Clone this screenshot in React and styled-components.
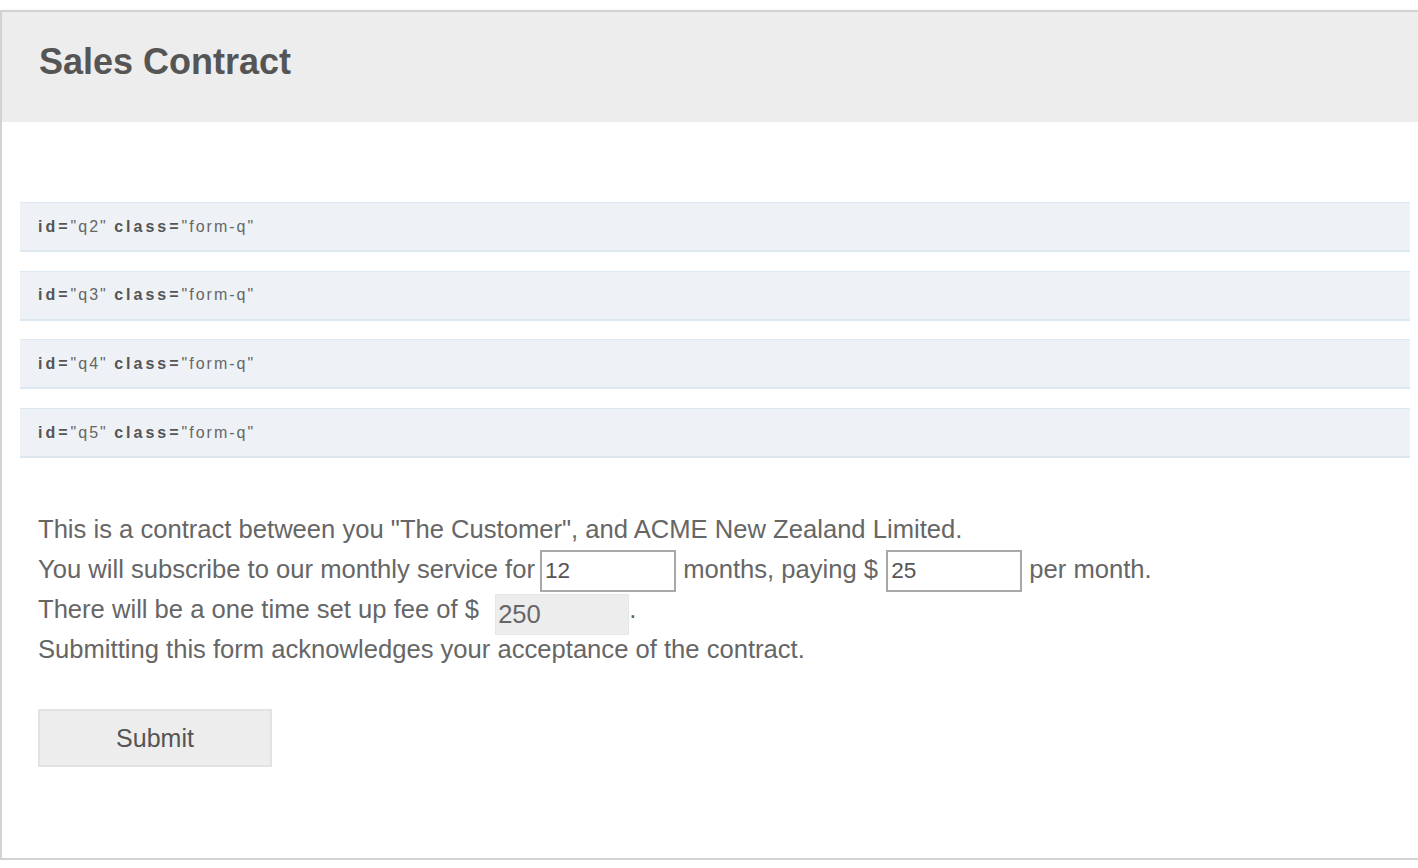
import React from "react";
import styled, { createGlobalStyle } from "styled-components";

const Global = createGlobalStyle`
  html, body {
    margin: 0;
    padding: 0;
    background: #ffffff;
    overflow: hidden;
  }
  body {
    font-family: "Liberation Sans", Arial, sans-serif;
  }
`;

const Frame = styled.div`
  margin-top: 10px;
  width: 1430px;
  box-sizing: border-box;
  border: 2px solid #d2d2d2;
  box-shadow: 0 0 4px rgba(0, 0, 0, 0.04);
  background: #ffffff;
`;

const Header = styled.header`
  height: 110px;
  box-sizing: border-box;
  background: #ededed;
  padding: 29.5px 37px 0;
`;

const Title = styled.h2`
  margin: 0;
  font-family: "Liberation Sans", Arial, sans-serif;
  font-weight: 700;
  font-size: 36px;
  line-height: 40px;
  color: #555555;
`;

const Content = styled.div`
  padding: 80px 18px 91px;
`;

const Questions = styled.div`
  display: flex;
  flex-direction: column;
  gap: 18.7px;
`;

const QuestionRow = styled.div`
  height: 50px;
  box-sizing: border-box;
  display: flex;
  align-items: center;
  padding: 0 18px;
  background: #eef2f6;
  border-top: 1px solid #dde7f0;
  border-bottom: 2px solid #dde7f0;
  font-family: "Liberation Sans", Arial, sans-serif;
  font-size: 16px;
  color: #5a5a5a;
  white-space: pre;
`;

const AttrName = styled.span`
  font-weight: 700;
  letter-spacing: 3px;
  color: #555555;
`;

const AttrValue = styled.span`
  font-weight: 400;
  letter-spacing: 2px;
  color: #666666;
`;

const Contract = styled.div`
  margin-top: 51px;
  padding: 0 18px;
  font-family: "Liberation Sans", Arial, sans-serif;
  font-size: 25.6px;
  color: #666666;
`;

const Line = styled.div`
  height: 40px;
  line-height: 40px;
  white-space: nowrap;
`;

const Field = styled.input`
  box-sizing: border-box;
  width: 136px;
  height: 41.5px;
  margin: 0 0 0 ${(p) => p.$offset || 0}px;
  padding: 0 3px;
  border: 2px solid #a9a9a9;
  border-radius: 0;
  background: #ffffff;
  font-family: "Liberation Sans", Arial, sans-serif;
  font-size: 22.6px;
  color: #555555;
  vertical-align: baseline;
  outline: none;
`;

const FeeField = styled.input`
  box-sizing: border-box;
  width: 134px;
  height: 41px;
  margin: 0 0 0 9px;
  padding: 0 2px;
  border: 1px solid #e6e6e6;
  border-radius: 0;
  background: #ededed;
  font-family: "Liberation Sans", Arial, sans-serif;
  font-size: 25.6px;
  color: #666666;
  vertical-align: -5px;
  outline: none;
`;

const Submit = styled.button`
  display: block;
  margin: 40px 0 0 18px;
  width: 234px;
  height: 58px;
  box-sizing: border-box;
  background: #ededed;
  border: 2px solid #e2e2e2;
  border-radius: 0;
  font-family: "Liberation Sans", Arial, sans-serif;
  font-size: 25px;
  color: #555555;
  padding: 0;
  cursor: pointer;
`;

const questions = ["q2", "q3", "q4", "q5"];

export default function App() {
  return (
    <>
      <Global />
      <Frame>
        <Header>
          <Title>Sales Contract</Title>
        </Header>
        <Content>
          <Questions>
            {questions.map((q) => (
              <QuestionRow key={q}>
                <AttrName>id=</AttrName>
                <AttrValue>{`"${q}" `}</AttrValue>
                <AttrName>class=</AttrName>
                <AttrValue>"form-q"</AttrValue>
              </QuestionRow>
            ))}
          </Questions>
          <Contract>
            <Line>
              This is a contract between you "The Customer", and ACME New Zealand Limited.
            </Line>
            <Line>
              You will subscribe to our monthly service for <Field $offset={-2} defaultValue="12" /> months, paying ${" "}
              <Field $offset={1} defaultValue="25" /> per month.
            </Line>
            <Line>
              There will be a one time set up fee of $ <FeeField readOnly value="250" />.
            </Line>
            <Line>Submitting this form acknowledges your acceptance of the contract.</Line>
          </Contract>
          <Submit type="button">Submit</Submit>
        </Content>
      </Frame>
    </>
  );
}
